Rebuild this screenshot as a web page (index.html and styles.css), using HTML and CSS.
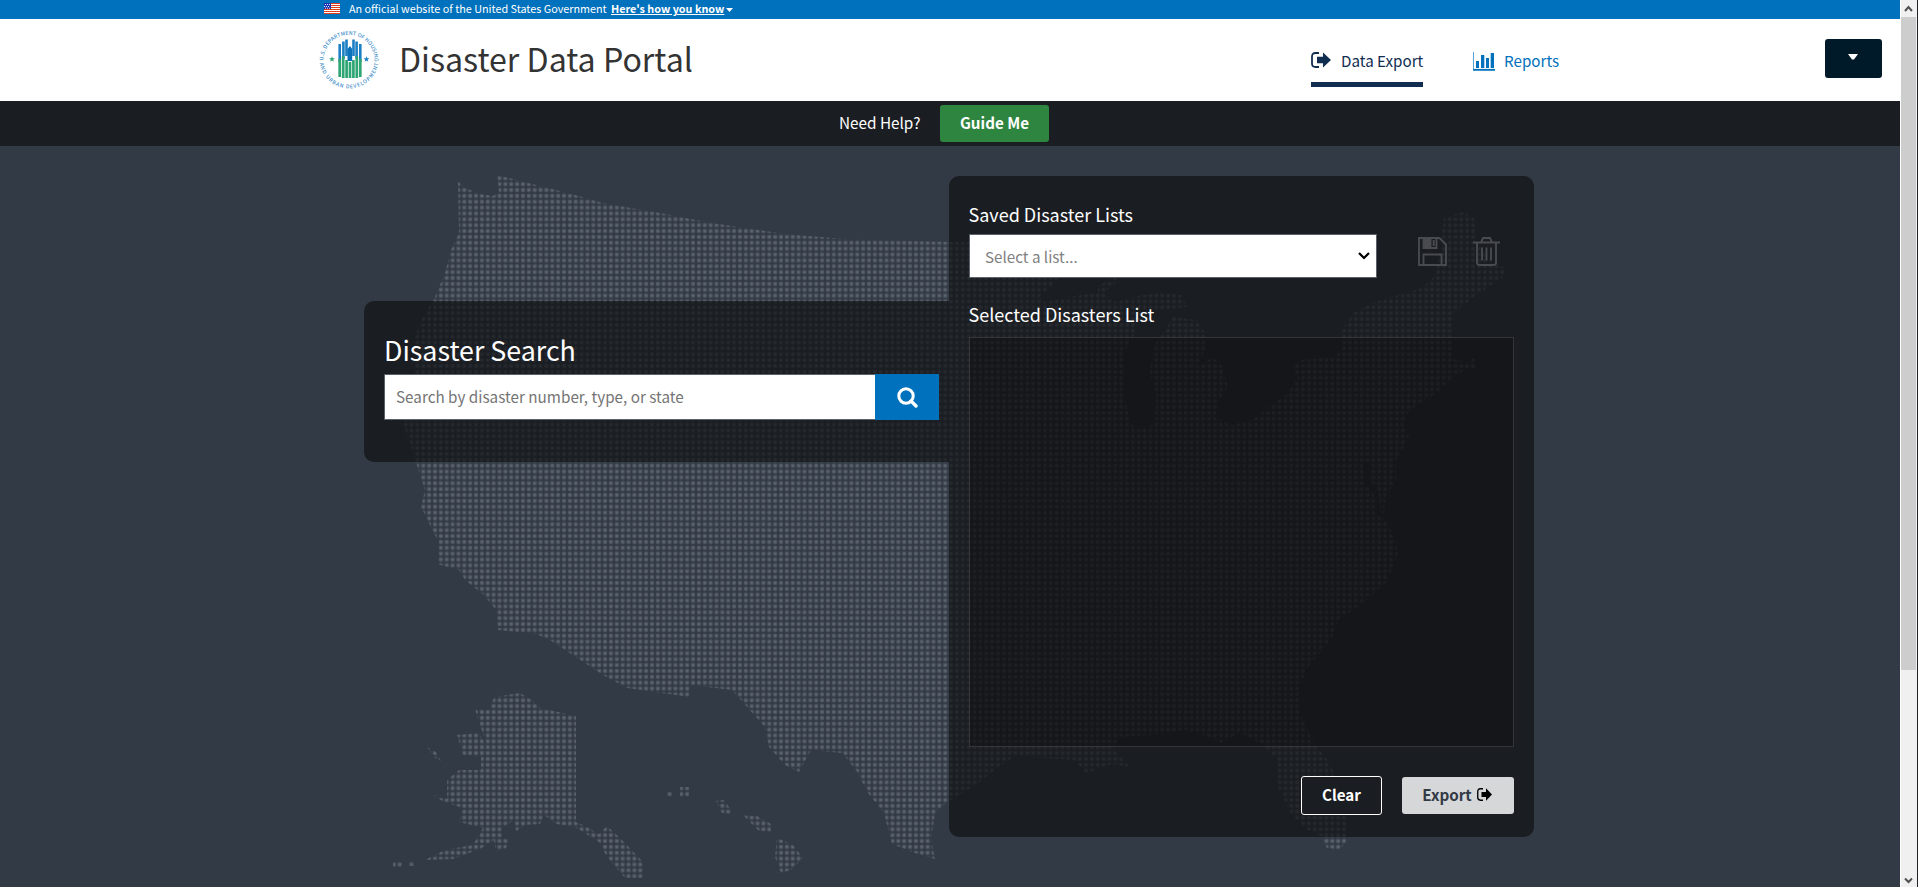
FILE: index.html
```html
<!DOCTYPE html>
<html lang="en">
<head>
<meta charset="utf-8">
<title>Disaster Data Portal</title>
<link rel="stylesheet" href="styles.css">
</head>
<body>
<div class="window">
<div class="page">
  <div class="gov-banner">
    <svg class="flag" width="16" height="11" viewBox="0 0 16 11">
      <rect width="16" height="11" fill="#fff"/>
      <path d="M0 .5h16M0 2.5h16M0 4.5h16M0 6.5h16M0 8.5h16M0 10.5h16" stroke="#db3e1f"/>
      <rect width="7" height="6" fill="#1e33b1"/>
      <path d="M1 1.5h6M0 3.5h6M1 5.2h6" stroke="#fff" stroke-width=".9" stroke-dasharray="1 1"/>
    </svg>
    <span class="gov-text">An official website of the United States Government</span>
    <a class="gov-link">Here's how you know</a>
    <svg class="gov-caret" width="7" height="4" viewBox="0 0 7 4"><path d="M0 0h7L3.5 4z" fill="#fff"/></svg>
  </div>

  <header class="header">
    <svg class="logo" width="64" height="64" viewBox="-32 -32 64 64">
      <defs>
        <path id="arc-top" d="M-25.6 1.5A25.6 25.6 0 1 1 25.6 1.5"/>
        <path id="arc-bottom" d="M-29.3 4A29.6 29.6 0 0 0 29.3 4"/>
      </defs>
      <g class="logo-text">
        <text><textPath href="#arc-top" textLength="81">U.S. DEPARTMENT OF HOUSING</textPath></text>
        <text><textPath href="#arc-bottom" textLength="84">AND URBAN DEVELOPMENT</textPath></text>
      </g>
      <path d="M-9.3 3V-15M-5.6 0V-17.500M-2.500 -3V-19.500M4.500 -3V-19.500M7.600 0V-17.500M11.300 3V-15" stroke="#1b7fc4" stroke-width="2.600"/>
      <path d="M-1.500 2V-10L1-13L3.200-10V2z" fill="#0a71bb"/>
      <path d="M-9.300 18V0M-5.800 19V-3M-2.400 19V1M1 19V3M4.400 19V1M7.800 19V-3M11.300 18V0" stroke="#2fa574" stroke-width="2.700"/>
      <path d="M-17-2.800l.8 2 2.100.1-1.700 1.400.6 2.100-1.800-1.200-1.800 1.200.6-2.100-1.700-1.400 2.100-.1z" fill="#2fa574"/>
      <path transform="translate(34.500 0)" d="M-17-2.800l.8 2 2.100.1-1.700 1.400.6 2.100-1.800-1.200-1.800 1.200.6-2.100-1.700-1.400 2.100-.1z" fill="#1b7fc4"/>
    </svg>
    <h1 class="site-title">Disaster Data Portal</h1>
    <nav class="nav">
      <a class="nav-item nav-active">
        <svg width="20" height="16" viewBox="0 0 20 16"><path d="M8 1H4.500Q1 1 1 4.500v7Q1 15 4.500 15H8" fill="none" stroke="#112e51" stroke-width="1.800"/><path d="M6 4.800h6V.4L20 8l-8 7.600v-4.400H6z" fill="#112e51"/></svg>
        <span>Data Export</span>
      </a>
      <a class="nav-item nav-reports">
        <svg width="22" height="19" viewBox="0 0 22 19"><path d="M.5 0v18.300H22" fill="none" stroke="#5aa3d6"/><path d="M0 17.700h22" stroke="#0071bc" stroke-width="1.600"/><path d="M3 9h3v7H3zM8 3h3.300v13H8zM13 6h3v10h-3zM17.700 1H21v15h-3.300z" fill="#0071bc"/></svg>
        <span>Reports</span>
      </a>
    </nav>
    <button class="user-menu"><svg width="10" height="6" viewBox="0 0 10 6"><path d="M0 0h10L6 5.600H4z" fill="#fff"/></svg></button>
  </header>

  <div class="help-bar">
    <span class="help-text">Need Help?</span>
    <button class="btn btn-guide">Guide Me</button>
  </div>

  <main class="main">
    <svg class="map" width="1900" height="741" viewBox="0 146 1900 741">
      <defs>
        <pattern id="dots" x="461.370" y="175.370" width="5.865" height="5.865" patternUnits="userSpaceOnUse">
          <rect x=".83" y=".83" width="4.200" height="4.200" rx="1.400" fill="#4a525e"/>
          <rect x="1.630" y="1.630" width="2.600" height="2.600" rx="1" fill="#5b636e"/>
        </pattern>
      </defs>
      <g fill="url(#dots)">
        <path d="M458 181L465 188 480 194 493 196 499 192 497 175 528 183 556 190 575 195 603 203 631 208 666 214 706 222 745 228 785 234 844 239 949 242 1010 242 1040 255 1062 265 1059 277 1053 285 1039 297 1045 302 1070 297 1098 292 1098 286 1114 277 1118 280 1104 294 1115 302 1142 295 1165 292 1181 295 1188 307 1170 309 1153 312 1138 322 1134 335 1124 353 1124 393 1130 423 1140 430 1155 423 1156 393 1150 373 1153 347 1165 330 1173 317 1197 320 1205 333 1205 350 1197 367 1213 357 1223 367 1228 387 1219 400 1215 417 1232 425 1252 420 1268 408 1288 393 1298 377 1292 367 1300 360 1335 357 1343 347 1339 333 1355 312 1371 303 1422 288 1436 275 1442 233 1444 218 1462 212 1474 217 1477 240 1488 260 1505 268 1503 277 1480 293 1454 312 1452 347 1454 359 1470 363 1474 356 1477 367 1458 373 1438 392 1410 410 1403 423 1409 437 1395 463 1397 480 1386 495 1384 515 1381 518 1378 490 1369 480 1371 462 1363 464 1364 482 1374 495 1376 515 1386 520 1395 540 1398 553 1387 582 1363 603 1339 620 1331 640 1308 667 1299 687 1300 713 1312 740 1330 763 1339 787 1347 813 1347 840 1340 850 1327 848 1321 836 1308 830 1292 815 1278 787 1278 760 1260 743 1240 733 1221 743 1209 737 1185 730 1153 735 1118 737 1114 750 1130 767 1112 764 1086 773 1074 760 1043 758 1015 756 999 767 976 785 947 802 935 813 931 840 935 859 915 853 892 844 884 813 868 793 856 770 842 753 811 750 799 772 785 765 769 747 765 727 732 690 690 685 689 697 627 688 603 675 550 640 536 634 498 630 496 610 484 595 465 580 459 570 437 564 439 543 421 507 425 490 411 447 403 423 415 373 415 337 421 320 435 297 445 273 451 250 459 233z"/>
        <path d="M494 697L520 693 532 700 540 708 576 716 576 822 587 827 599 834 607 826 620 838 643 862 643 878 625 878 607 857 599 842 575 827 556 824 544 815 540 824 526 825 516 831 514 820 502 828 502 837 509 840 506 848 496 852 494 840 480 849 453 859 425 860 445 850 473 845 483 828 459 822 463 808 444 802 433 795 447 799 447 780 459 770 481 770 481 757 463 755 457 735 478 733 487 745 481 728 475 709 490 709z"/>
        <path d="M427 747l9 5 5 9-7-4zM393 862h9v5h-9zM408 861h6v5h-6zM667 792h5v5h-5zM680 787h9v10h-9zM716 801l8-1 7 10-1 4-8-1zM743 815l14 1 14 8v8l-12-1zM777 838l16 7 10 13-12 12-10 3-6-16z"/>
      </g>
    </svg>

    <div class="panels">
      <section class="search-panel">
        <h2 class="search-title">Disaster Search</h2>
        <div class="search-row">
          <div class="search-input">Search by disaster number, type, or state</div>
          <button class="search-btn"><svg width="21" height="21" viewBox="0 0 21 21"><circle cx="9" cy="9" r="7.200" fill="none" stroke="#fff" stroke-width="3"/><path d="M14 14l5 5" stroke="#fff" stroke-width="3.400" stroke-linecap="round"/></svg></button>
        </div>
      </section>

      <section class="list-panel">
        <h3 class="label">Saved Disaster Lists</h3>
        <div class="select-row">
          <div class="select"><span>Select a list...</span>
            <svg width="12" height="8" viewBox="0 0 12 8"><path d="M1 1l5 5 5-5" fill="none" stroke="#000" stroke-width="2.200"/></svg>
          </div>
          <svg class="icon-save" width="29" height="29" viewBox="0 0 29 29" fill="none" stroke="#484b4f" stroke-width="1.900"><path d="M1 1h20.500L28 7.500V28H1z"/><path d="M5.500 28V17.500h18V28M18.500 1v10H5.500V1"/><path d="M6 1h6.500v9.500H6z" fill="#484b4f"/><path d="M15.700 3v6"/></svg>
          <svg class="icon-trash" width="27" height="29" viewBox="0 0 27 29" fill="none" stroke="#484b4f" stroke-width="1.900"><path d="M0 5.500h27M8 5.500L10 1h7l2 4.500M4 5.500V25.500Q4 28 6.500 28h14Q23 28 23 25.500V5.500"/><path d="M9 10.500v13M13.500 10.500v13M18 10.500v13"/></svg>
        </div>
        <h3 class="label label-selected">Selected Disasters List</h3>
        <div class="selected-box"></div>
        <div class="actions">
          <button class="btn btn-clear">Clear</button>
          <button class="btn btn-export">Export <svg width="15" height="13" viewBox="0 0 20 16" preserveAspectRatio="none"><path d="M8 1H4.500Q1 1 1 4.500v7Q1 15 4.500 15H8" fill="none" stroke="#000" stroke-width="1.800"/><path d="M6 4.800h6V.4L20 8l-8 7.600v-4.400H6z"/></svg></button>
        </div>
      </section>
    </div>
  </main>
</div>
<div class="scrollbar">
  <svg width="15" height="17" viewBox="0 0 15 17"><path d="M4 11l3.500-4 3.500 4" fill="none" stroke="#505050" stroke-width="2"/></svg>
  <div class="thumb"></div>
  <svg class="down" width="15" height="17" viewBox="0 0 15 17"><path d="M4 8.500L7.500 12 11 8.500" fill="none" stroke="#505050" stroke-width="2"/></svg>
</div>
</div>
</body>
</html>
```
FILE: styles.css
```css
* { box-sizing: border-box; }
body {
  margin: 0;
  font-family: "Noto Sans CJK SC", "Open Sans", sans-serif;
  font-size: 15.2px;
  overflow: hidden;
}
h1, h2, h3 { margin: 0; font-weight: 400; }
button { border: 0; padding: 0; font: inherit; }
svg { flex: none; }
.window { display: flex; width: 1918px; height: 887px; }
.page { width: 1900px; display: flex; flex-direction: column; }

.gov-banner {
  height: 19px;
  padding: 0 0 2px 324px;
  background: #0071bc;
  color: #fff;
  display: flex;
  align-items: center;
  font-size: 10.8px;
  line-height: 17px;
  white-space: nowrap;
}
.gov-text { margin-left: 9px; width: 262px; }
.gov-link { font-weight: 700; text-decoration: underline; width: 113px; }
.gov-caret { margin: 2px 0 0 2px; }

.header {
  height: 82px;
  padding: 0 18px 0 317px;
  background: #fff;
  display: flex;
  align-items: center;
}
.logo { margin-bottom: 2px; }
.logo-text { font-family: "Noto Sans CJK SC", sans-serif; font-size: 5.200px; font-weight: 500; fill: #3d8dc9; }
.site-title { margin-left: 18px; padding-bottom: 4px; width: 912px; font-size: 32.150px; line-height: 48px; color: #333; white-space: nowrap; }
.nav { display: flex; gap: 50px; flex: 1; }
.nav-item {
  display: flex;
  align-items: center;
  gap: 10px;
  height: 54px;
  padding-top: 5px;
  border-bottom: 5px solid transparent;
  color: #0071bc;
  white-space: nowrap;
}
.nav-active { color: #112e51; border-color: #112e51; width: 112px; }
.nav-reports { gap: 9px; }
.nav-reports svg { margin-top: 2px; }
.user-menu { width: 57px; height: 39px; margin-bottom: 3px; border-radius: 3px; background: #001a29; display: flex; align-items: center; justify-content: center; padding: 0 1px 4px 0; }

.help-bar {
  height: 45px;
  padding-left: 839px;
  background: #1a1d21;
  color: #fff;
  display: flex;
  align-items: center;
}
.help-text { width: 101px; padding-bottom: 3px; font-size: 15.3px; white-space: nowrap; }
.btn { height: 37px; border-radius: 3px; font-weight: 700; padding-bottom: 3px; white-space: nowrap; }
.btn-guide { width: 109px; background: #2e8540; color: #fff; }

.main { position: relative; flex: 1; background: #323a45; }
.map { position: absolute; left: 0; top: 0; }
.panels { position: relative; display: flex; align-items: flex-start; padding: 30px 0 0 364px; color: #fff; }
.search-panel {
  width: 585px;
  height: 161px;
  margin-top: 125px;
  padding: 26px 10px 0 20px;
  border-radius: 10px 0 0 10px;
  background: rgba(16, 17, 18, .7);
}
.search-title { font-size: 26.800px; line-height: 45px; margin-bottom: 2px; }
.search-row { display: flex; height: 46px; }
.search-input { flex: 1; background: #fff; border: 1px solid #5b616b; border-right: 0; color: #757575; padding-left: 11px; line-height: 43px; font-size: 15.250px; }
.search-btn { width: 64px; background: #0071bc; display: flex; align-items: center; justify-content: center; }

.list-panel {
  width: 585px;
  height: 661px;
  padding: 21px 20px 0;
  border-radius: 10px;
  background: rgba(16, 17, 18, .7);
}
.label { font-size: 18px; line-height: 34px; margin: 0 0 3px -.5px; }
.select-row { display: flex; height: 44px; }
.select {
  width: 408px;
  background: #fff;
  border: 1px solid #5b616b;
  color: #808080;
  display: flex;
  align-items: center;
  justify-content: space-between;
  padding: 0 6px 0 15px;
}
.icon-save { margin: 3px 0 0 41px; }
.icon-trash { margin: 3px 0 0 26px; }
.label-selected { margin-top: 19px; }
.selected-box { height: 410px; margin-top: 6px; border: 1px solid #33353a; background: rgba(0, 0, 0, .22); }
.actions { display: flex; justify-content: flex-end; align-items: center; gap: 20px; margin-top: 29px; }
.btn-clear { width: 81px; height: 39px; border: 1px solid #fff; background: #1a1d21; color: #fff; }
.btn-export { width: 112px; background: #d6d7d9; color: #323a45; display: flex; align-items: center; justify-content: center; gap: 5px; padding-right: 2px; }

.scrollbar {
  width: 18px;
  border-left: 1px solid #fff;
  border-right: 1px solid #20242a;
  background: #f0f0f0;
  display: flex;
  flex-direction: column;
}
.thumb { width: 15px; height: 653px; background: #cdcdcd; }
.down { margin-top: auto; }
```
